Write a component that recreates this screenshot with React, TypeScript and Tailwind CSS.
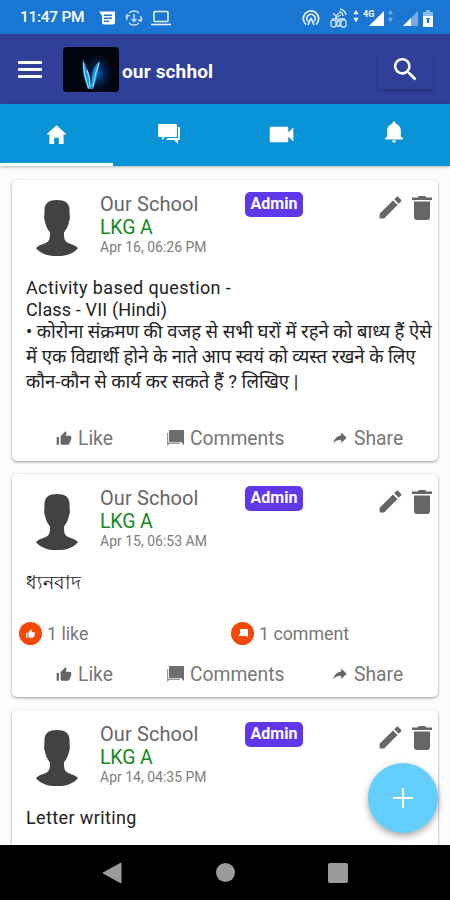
import React from "react";
import { IoMdCreate, IoMdHome, IoMdNotifications, IoMdShareAlt, IoMdThumbsUp, IoMdVideocam } from "react-icons/io";
import { MdSearch } from "react-icons/md";

type Post = {
  date: string;
  body: { text: string; style: string }[];
  stats?: boolean;
  actions?: boolean;
  height: string;
};

const LATIN = "h-[22px] leading-[25px] tracking-[0.38px]";
const HINDI = "h-[25px] leading-[27px] text-[18.500px]";
const BENGALI = "h-[25px] leading-[27px] text-[19.200px]";

const POSTS: Post[] = [
  {
    date: "Apr 16, 06:26 PM",
    height: "h-[281px]",
    actions: true,
    body: [
      { text: "Activity based question -", style: LATIN },
      { text: "Class - VII (Hindi)", style: "h-[22px] leading-[25px] tracking-[0.15px]" },
      { text: "• कोरोना संक्रमण की वजह से सभी घरों में रहने को बाध्य हैं ऐसे", style: HINDI },
      { text: "में एक विद्यार्थी होने के नाते आप स्वयं को व्यस्त रखने के लिए", style: HINDI },
      { text: "कौन-कौन से कार्य कर सकते हैं ? लिखिए |", style: HINDI },
    ],
  },
  { date: "Apr 15, 06:53 AM", height: "h-[223px]", body: [{ text: "ধ্যনবাদ", style: BENGALI }], stats: true, actions: true },
  { date: "Apr 14, 04:35 PM", height: "h-[223px]", body: [{ text: "Letter writing", style: LATIN }] },
];

function StatusBar() {
  return (
    <div className="flex h-[34px] shrink-0 items-center bg-[#1976d2] pl-[20px] pt-[2px] text-white">
      <span className="w-[64px] whitespace-nowrap text-[15.500px] font-medium tracking-[-0.3px]">11:47 PM</span>
      <svg className="ml-[15px]" width="17" height="15" viewBox="0 0 17 15" fill="currentColor">
        <path fillRule="evenodd" d="M0 0.500h16v11q0 2-2 2H5q-2 0-2-2V4.500L0 0.500Zm5 3v1.500h8V3.500Zm0 3v1.500h8V6.500Zm0 3V11h5V9.500Z" />
      </svg>
      <svg className="ml-[9px] opacity-75" width="18" height="18" viewBox="0 0 18 18" fill="none" stroke="currentColor" strokeWidth="1.500">
        <path d="M4 4a7 7 0 0 1 10 0M4 14a7 7 0 0 0 10 0M2 6v5M16 7v5M9 5v7M6.500 10 9 12.500 11.500 10" />
        <path d="m1 9 1-3 3 1M17 9l-1 3-3-1" />
      </svg>
      <svg className="ml-[8px] opacity-90" width="20" height="16" viewBox="0 0 20 16" fill="none" stroke="currentColor" strokeWidth="1.600">
        <rect x="3" y="1.500" width="14" height="10" rx="1" />
        <path d="M0 14.500h20" />
      </svg>
      <svg className="ml-[131px] opacity-90" width="18" height="17" viewBox="0 0 18 17" fill="none" stroke="currentColor" strokeWidth="1.700">
        <path d="M4 14.500a7.700 7.700 0 1 1 10 0M6 11.500a4.200 4.200 0 1 1 6 0" />
        <path d="m9 8-3 7M9 8l3 7" />
      </svg>
      <svg className="ml-[10px] opacity-80" width="18" height="22" viewBox="0 0 18 22" fill="none" stroke="currentColor" strokeWidth="1.300">
        <path d="M10 2q5 1 6 6M9 5q4 0 4 4M3 6l3 3 3-3M6 9v3M5 11l6-3" />
        <rect x="1" y="13" width="5" height="7" rx="2" />
        <rect x="11" y="13" width="5" height="7" rx="2" />
        <path d="M2 12h13M7 14h3v5H7Z" />
      </svg>
      <svg className="ml-[4px] mt-[-4px]" width="8" height="14" viewBox="0 0 8 16" fill="currentColor">
        <path d="m4 1 3 5H1ZM4 15l3-5H1Z" />
      </svg>
      <svg className="ml-[3px]" width="22" height="20" viewBox="0 0 22 20" fill="currentColor">
        <path d="M21 3v15H6Z" />
        <text x="0" y="9" fontSize="9" fontWeight="700" fontFamily="Roboto">4G</text>
      </svg>
      <svg className="ml-[2px] mt-[-4px] opacity-40" width="7" height="14" viewBox="0 0 8 16" fill="currentColor">
        <path d="m4 1 3 5H1ZM4 15l3-5H1Z" />
      </svg>
      <svg className="ml-[9px]" width="15" height="17" viewBox="0 0 15 17" fill="currentColor">
        <path opacity=".4" d="M15 1v15H0Z" />
        <path d="M8 8v8H0Z" />
      </svg>
      <svg className="ml-[5px]" width="10" height="17" viewBox="0 0 10 17" fill="currentColor">
        <path opacity=".5" d="M3 0h4v2h3v5H0V2h3Z" />
        <path fillRule="evenodd" d="M0 6h10v11H0Zm3 2 1 2v3h2v-3l1-2Z" />
      </svg>
    </div>
  );
}

function Header() {
  return (
    <header className="flex h-[70px] shrink-0 items-center bg-[#303f98] pl-[18px] pr-[17px] text-white">
      <div className="flex w-[24px] flex-col gap-[4px]">
        <span className="h-[3px] rounded-[1px] bg-white" />
        <span className="h-[3px] rounded-[1px] bg-white" />
        <span className="h-[3px] rounded-[1px] bg-white" />
      </div>
      <svg className="ml-[21px]" width="56" height="45" viewBox="0 0 56 45">
        <defs>
          <radialGradient id="glow">
            <stop offset="0" stopColor="#0757b8" />
            <stop offset="1" stopColor="#000a20" stopOpacity="0" />
          </radialGradient>
        </defs>
        <rect width="56" height="45" rx="4" fill="#01040d" />
        <ellipse cx="35" cy="27" rx="17" ry="22" fill="url(#glow)" />
        <path d="M20 12c-1 9 0 17 5 30h3c0-9-1-15-4-20l-4-10ZM37 14c-7 5-9 14-9 28h2c4-11 5-17 7-28Z" fill="#1d95df" />
        <path d="M20.500 16q0 11 5 25M24 23q3 7 3 17M36 16q-4 10-6 24" fill="none" stroke="#a5eaff" strokeWidth="1" />
      </svg>
      <h1 className="ml-[3px] mt-[7px] text-[19px] font-bold tracking-[0.15px]">our schhol</h1>
      <button className="ml-auto flex h-[39px] w-[56px] items-center justify-center rounded-[3px] shadow-[0_2px_3px_rgba(0,0,0,0.2)]">
        <MdSearch size={31} />
      </button>
    </header>
  );
}

function Tabs() {
  return (
    <nav className="relative z-10 grid h-[62px] shrink-0 grid-cols-4 bg-[#0994d8] text-white shadow-[0_1px_3px_rgba(0,0,0,0.3)]">
      <div className="flex items-center justify-center border-b-[3px] border-white pt-[1px]"><IoMdHome size={25} /></div>
      <div className="flex items-center justify-center pb-[2px]">
        <svg width="22" height="20" viewBox="0 0 22 20" fill="currentColor">
          <path d="M1 0h17q1 0 1 1v11q0 1-1 1H7l-3 3v-3H1q-1 0-1-1V1q0-1 1-1Z" />
          <path d="M20 3h1q1 0 1 1v11q0 1-1 1h-1v4l-4-4H8l2-2h10Z" />
        </svg>
      </div>
      <div className="flex items-center justify-center pb-[2px]"><IoMdVideocam size={27} /></div>
      <div className="flex items-center justify-center pb-[6px]"><IoMdNotifications size={26} /></div>
    </nav>
  );
}

function Avatar() {
  return (
    <svg width="42" height="56" viewBox="0 0 42 57" preserveAspectRatio="none" fill="#424242">
      <path d="M21 0C13 0 8 3 8.500 12c0 3-1 7 .5 10 1 5 2 7 5 11 0 4 0 8-3 10-3 2-7 2-11 6 9 11 33 11 42 0-4-4-8-4-11-6-3-2-3-6-3-10 3-4 4-6 5-11 1.500-3 .5-7 .5-10C34 3 29 0 21 0Z" />
    </svg>
  );
}

function TrashIcon() {
  return (
    <svg width="20" height="24" viewBox="0 0 20 24" fill="currentColor">
      <path d="M0 1.500h5.500L7 0h6l1.500 1.500H20V4H0ZM2 5.500h16V21q0 3-3 3H5q-3 0-3-3Z" />
    </svg>
  );
}

function CommentsIcon() {
  return (
    <svg width="17" height="16" viewBox="0 0 17 16" fill="#6e6e6e">
      <path d="M3 0h13q1 0 1 1v14l-3-3H3q-1 0-1-1V1q0-1 1-1Z" />
      <path d="M0 3h1.200v9.500H13V14H2.500L0 16Z" opacity=".7" />
    </svg>
  );
}

function PostCard({ post }: { post: Post }) {
  return (
    <article className={`flex shrink-0 flex-col rounded-[5px] bg-white shadow-[0_1px_3px_rgba(0,0,0,0.4)] ${post.height}`}>
      <div className="flex h-[95px] shrink-0 pl-[24px] pr-[6px] pt-[20px]">
        <Avatar />
        <div className="ml-[22px] mt-[-8px] w-[145px] whitespace-nowrap">
          <h2 className="text-[20px] leading-[24px] tracking-[0.1px] text-[#666]">Our School</h2>
          <p className="text-[19.500px] leading-[23px] tracking-[-0.15px] text-[#158a20]">LKG A</p>
          <p className="text-[14px] leading-[16px] text-[#7d7d7d]">{post.date}</p>
        </div>
        <span className="mt-[-8px] flex h-[25px] w-[58px] items-center justify-center rounded-[5px] bg-[#6038ea] pb-[1px] text-[16px] font-bold text-white">
          Admin
        </span>
        <div className="ml-auto mt-[-7px] flex h-[29px] items-center gap-[7px] text-[#666]">
          <IoMdCreate size={29} />
          <TrashIcon />
        </div>
      </div>
      <div className="pl-[14px] text-[18px] text-[#222]">
        {post.body.map((line) => (
          <p key={line.text} className={`whitespace-nowrap ${line.style}`}>{line.text}</p>
        ))}
      </div>
      <div className="mt-auto text-[#777]">
        {post.stats && (
          <div className="mb-[6px] flex h-[24px] items-center pl-[7px] text-[17.800px]">
            <span className="flex size-[23px] items-center justify-center rounded-full bg-[#f44708] text-white"><IoMdThumbsUp size={11} /></span>
            <span className="ml-[5px] mt-[2px] w-[184px]">1 like</span>
            <span className="flex size-[23px] items-center justify-center rounded-full bg-[#f44708]">
              <svg width="10" height="9" viewBox="0 0 10 9" fill="white"><path d="M2 0h8v8L8 7H0l2-2Z" /></svg>
            </span>
            <span className="ml-[5px] mt-[2px]">1 comment</span>
          </div>
        )}
        {post.actions && (
          <div className="flex h-[46px] items-center pl-[43px] text-[19.300px]">
            <span className="flex w-[112px] items-center gap-[5px]"><IoMdThumbsUp className="text-[#666]" size={18} /><span className="mt-[2px]">Like</span></span>
            <span className="flex w-[164px] items-center gap-[6px]"><CommentsIcon /><span className="mt-[2px]">Comments</span></span>
            <span className="flex items-center gap-[5px]"><IoMdShareAlt className="text-[#666]" size={18} /><span className="mt-[2px]">Share</span></span>
          </div>
        )}
      </div>
    </article>
  );
}

function NavBar() {
  return (
    <div className="flex h-[55px] shrink-0 items-center bg-black">
      <svg className="ml-[102px]" width="20" height="22" viewBox="0 0 20 22" fill="#9b9b9b"><path d="M19 1v20L1 11Z" stroke="#9b9b9b" strokeLinejoin="round" /></svg>
      <span className="ml-[94px] size-[19px] rounded-full bg-[#9b9b9b]" />
      <span className="ml-[93px] size-[20px] rounded-[2px] bg-[#9b9b9b]" />
    </div>
  );
}

export default function App() {
  return (
    <div className="relative flex h-[900px] w-[450px] flex-col overflow-hidden bg-[#fcfcfc] font-['Roboto','Noto_Sans',sans-serif]">
      <StatusBar />
      <Header />
      <Tabs />
      <main className="flex min-h-0 flex-1 flex-col gap-[13px] overflow-hidden px-[12px] pt-[14px]">
        {POSTS.map((post) => (
          <PostCard key={post.date} post={post} />
        ))}
      </main>
      <NavBar />
      {/* New post button floats over the feed */}
      <button className="absolute bottom-[67px] right-[12px] flex size-[70px] items-center justify-center rounded-full bg-[#63cefb] shadow-[0_3px_7px_rgba(0,0,0,0.35)]">
        <svg width="20" height="20" viewBox="0 0 20 20" stroke="white" strokeWidth="2.200"><path d="M10 0v20M0 10h20" /></svg>
      </button>
    </div>
  );
}
